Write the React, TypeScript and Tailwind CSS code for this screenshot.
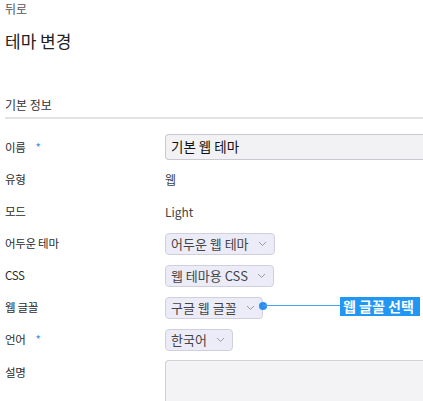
import { ReactNode } from 'react';

const font = { fontFamily: '"Noto Sans CJK KR", "Noto Sans", sans-serif' };

function Chevron() {
  return (
    <svg width="9" height="6" viewBox="0 0 9 6" className="ml-[9px] shrink-0">
      <path d="M1 1 L4.5 4.5 L8 1" fill="none" stroke="#9a9aa6" strokeWidth="1" />
    </svg>
  );
}

function Select({ label }: { label: string }) {
  return (
    <div className="inline-flex h-[22px] items-center rounded-[4px] border border-[#cfd0dc] bg-[#ececf8] pl-[5px] pr-[7px] text-[13px] text-[#444]">
      {label}
      <Chevron />
    </div>
  );
}

function Row({ label, required, children }: { label: string; required?: boolean; children: ReactNode }) {
  return (
    <div className="flex h-8 items-center">
      <div className="w-[160px] shrink-0 text-[11.5px] tracking-[-0.3px] text-[#2c2c2c]">
        {label}
        {required && <span className="ml-[10px] text-[#3b8fe8]">*</span>}
      </div>
      <div className="flex flex-1 items-center">{children}</div>
    </div>
  );
}

export default function App() {
  return (
    <div className="relative h-[401px] w-[423px] overflow-hidden bg-white pl-[5px]" style={font}>
      <div className="flex h-[18px] items-center text-[12px] text-[#555]">뒤로</div>
      <div className="mt-[13px] flex h-5 items-center text-[17px] text-[#222]">테마 변경</div>
      <div className="mt-[45px] flex h-[18px] items-center text-[12px] text-[#333]">기본 정보</div>
      <div className="mt-[3px] h-[2px] bg-[#e2e2e2]" />

      <div className="mt-[13px]">
        <Row label="이름" required>
          <div className="-mt-[3px] flex h-[26px] flex-1 items-center rounded-l-[4px] border border-r-0 border-[#c9c9d1] bg-[#f2f2f5] pl-[5px] text-[13.5px] text-[#111]">
            기본 웹 테마
          </div>
        </Row>
        <Row label="유형">
          <span className="text-[12px] text-[#444]">웹</span>
        </Row>
        <Row label="모드">
          <span className="text-[12px] text-[#444]">Light</span>
        </Row>
        <Row label="어두운 테마">
          <Select label="어두운 웹 테마" />
        </Row>
        <Row label="CSS">
          <Select label="웹 테마용 CSS" />
        </Row>
        <Row label="웹 글꼴">
          <Select label="구글 웹 글꼴" />
        </Row>
        <Row label="언어" required>
          <Select label="한국어" />
        </Row>
        <div className="flex">
          <div className="w-[160px] shrink-0 pt-[8px] text-[11.5px] tracking-[-0.3px] text-[#2c2c2c]">설명</div>
          <div className="mt-[4px] h-[60px] flex-1 rounded-tl-[4px] border border-r-0 border-[#d0d0d6] bg-[#f3f3f6]" />
        </div>
      </div>

      {/* annotation */}
      <div className="absolute left-[259px] top-[302px] h-[8px] w-[8px] rounded-full bg-[#2a8ff0]" />
      <div className="absolute left-[263px] top-[305px] h-[1px] w-[78px] bg-[#4aa3f5]" />
      <div className="absolute left-[340px] top-[297px] flex h-[19px] w-[80px] items-center bg-[#2196f3] pl-[3px] text-[14px] font-bold text-white">
        웹 글꼴 선택
      </div>
    </div>
  );
}
